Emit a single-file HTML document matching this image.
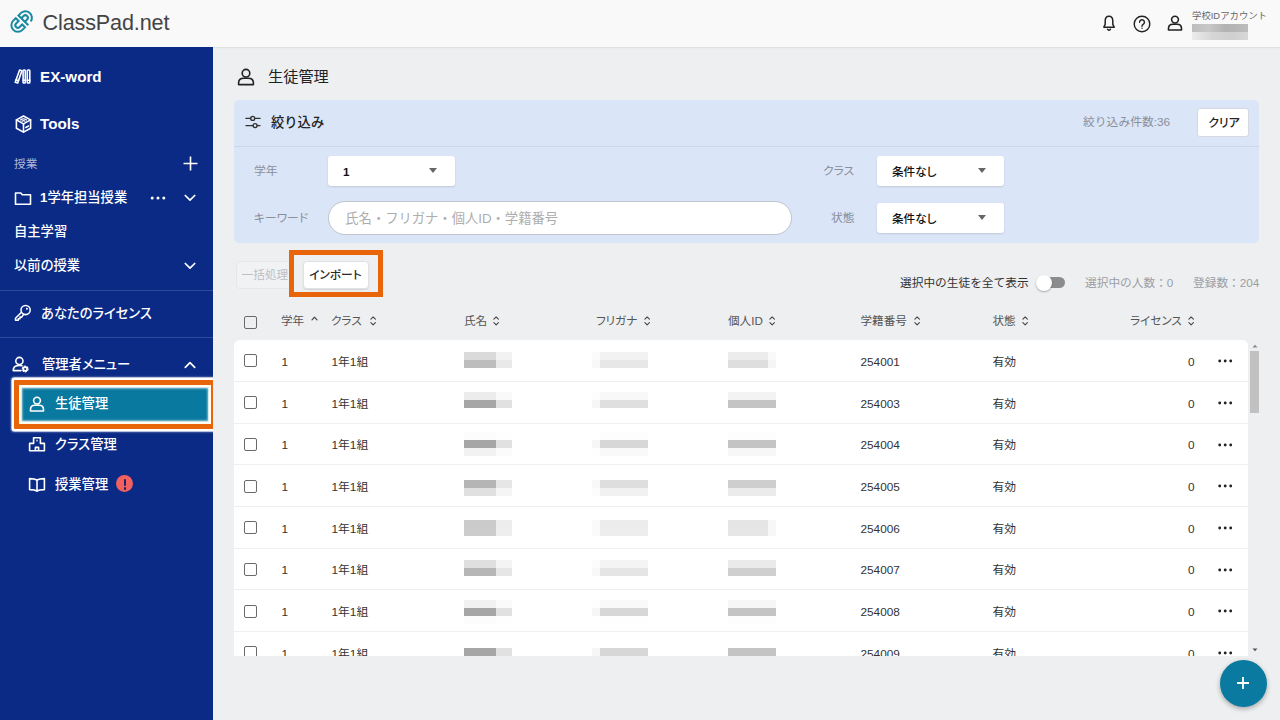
<!DOCTYPE html>
<html lang="ja">
<head>
<meta charset="utf-8">
<title>ClassPad.net</title>
<style>
*{box-sizing:border-box;margin:0;padding:0}
html,body{width:1280px;height:720px;overflow:hidden}
body{font-family:"Liberation Sans","Noto Sans CJK JP",sans-serif;background:#eeeff0;color:#222;position:relative;font-size:13px;font-feature-settings:"palt"}
.np{font-feature-settings:normal}
.abs{position:absolute}
#hdr{position:absolute;left:0;top:0;width:1280px;height:46.5px;background:#f9f9fa;box-shadow:0 0 2px rgba(0,0,0,.18)}
#logo-t{position:absolute;left:42.6px;top:9px;font-size:21.6px;line-height:28px;color:#444;letter-spacing:-0.15px;white-space:nowrap}
#side{overflow:hidden;position:absolute;left:0;top:46.5px;width:213.4px;height:674px;background:#0b2a85;color:#fff}
.sl{position:absolute;white-space:nowrap;color:#fff;line-height:20px}
.t{position:absolute;white-space:nowrap;line-height:20px}
#filter{position:absolute;left:234.3px;top:100.3px;width:1025.2px;height:143px;background:#dbe5f8;border-radius:5px}
#filter .hl{position:absolute;left:0;top:46px;width:100%;height:1px;background:#c9d6ee}
.sel{position:absolute;background:#fff;border-radius:3px;height:30px;width:127px;box-shadow:0 1px 2px rgba(0,0,0,.12)}
.sel span{position:absolute;left:15px;top:6px;line-height:20px;font-size:11.6px;color:#111;font-weight:500}
.sel i{position:absolute;right:18px;top:12px;width:0;height:0;border-left:4.5px solid transparent;border-right:4.5px solid transparent;border-top:5px solid #666}
.lbl{position:absolute;font-size:11.8px;color:#8a8f98;line-height:20px;white-space:nowrap}
#tbl{position:absolute;left:234px;top:340.3px;width:1013.6px;height:315.7px;background:#fff;border-radius:6px 6px 0 0;overflow:hidden}
.row{position:absolute;left:0;width:1014px;height:41.7px;border-bottom:1px solid #eeeff1}
.row .t{font-size:11.8px;color:#333;top:11.6px}
.cb{position:absolute;width:13px;height:13px;border:1.5px solid #6a6a6a;border-radius:2px}
.mz{position:absolute}
.th{position:absolute;top:311px;font-size:11.6px;color:#555;line-height:20px;white-space:nowrap}
</style>
</head>
<body>
<div id="hdr">
  <svg class="abs" style="left:8px;top:8px" width="28" height="28" viewBox="0 0 28 28" fill="none" stroke="#1a8aa2" stroke-width="2" stroke-linejoin="miter">
    <g transform="translate(13.6,13.5) rotate(-45)">
      <path d="M-1.7 -6.5 H-5.3 A6.5 6.5 0 0 0 -5.3 6.5 H-1.7 V2.5 H-5.3 A2.5 2.5 0 0 1 -5.3 -2.5 H-1.7 Z"/>
      <path d="M2.1 7.4 V-6.5 H5.3 A6.5 6.5 0 0 1 6.5 6.4"/>
      <path d="M2.1 -2.5 H5.3 A2.5 2.5 0 0 1 5.3 2.5 H2.1"/>
    </g>
  </svg>
  <div id="logo-t">ClassPad.net</div>
<svg class="abs" style="left:1101px;top:14px" width="16" height="18" viewBox="0 0 16 18" fill="none" stroke="#222" stroke-width="1.5" stroke-linejoin="round" stroke-linecap="round"><path d="M8 2.2 C5.4 2.2 4.2 4.4 4.2 7 V10.4 L2.8 13.2 H13.2 L11.8 10.4 V7 C11.8 4.4 10.6 2.2 8 2.2 Z"/><path d="M6.6 15.2 a1.5 1.5 0 0 0 2.8 0"/></svg>
<svg class="abs" style="left:1133px;top:14.5px" width="18" height="18" viewBox="0 0 18 18" fill="none" stroke="#222" stroke-width="1.4" stroke-linecap="round"><circle cx="9" cy="9" r="7.8"/><path d="M6.6 7.2 a2.4 2.4 0 1 1 3.6 2.1 c-.8 .5 -1.2 .9 -1.2 1.9"/><circle cx="9" cy="13.3" r=".7" fill="#222" stroke="none"/></svg>
<svg class="abs" style="left:1167px;top:15px" width="16" height="16" viewBox="0 0 16 16" fill="none" stroke="#222" stroke-width="1.6" stroke-linejoin="round"><circle cx="8" cy="4.6" r="3.4"/><path d="M1.5 15 V13.4 C1.5 10.6 3.4 9.2 6 9.2 H10 C12.6 9.2 14.5 10.6 14.5 13.4 V15 Z"/></svg>
<div class="t np" style="left:1192px;top:5.6px;font-size:9.4px;color:#666">学校IDアカウント</div>
<div class="abs" style="left:1192px;top:24px;width:56px;height:8px;background:linear-gradient(90deg,#bdbdbd,#c8c8c8 30%,#b2b2b2 60%,#bcbcbc);filter:blur(.6px)"></div>
<div class="abs" style="left:1192px;top:32px;width:56px;height:8px;background:linear-gradient(90deg,#ececec,#d6d6d6 35%,#cfcfcf 70%,#d8d8d8);filter:blur(.6px)"></div>

</div>
<div id="side">
  <!-- EX-word -->
  <svg class="abs" style="left:14.2px;top:22.6px" width="18" height="15" viewBox="0 0 18 15" fill="none" stroke="#fff" stroke-width="1.6" stroke-linejoin="round" stroke-linecap="round">
    <path d="M5.6 1 L7.9 1.7 L3.7 14 L1.2 13.3 Z"/><path d="M2 10.9 L4.5 11.6"/>
    <rect x="9.1" y="1" width="2.2" height="13" rx="0.7"/><path d="M9.1 11.2 h2.2"/>
    <rect x="13.3" y="1" width="2.5" height="13" rx="0.7"/><path d="M13.3 11.2 h2.5"/>
  </svg>
  <div class="sl" style="left:40px;top:20px;font-size:15.2px;font-weight:bold">EX-word</div>
  <!-- Tools -->
  <svg class="abs" style="left:14.8px;top:68px" width="17" height="18" viewBox="0 0 17 18" fill="none" stroke="#fff" stroke-width="1.6" stroke-linejoin="round" stroke-linecap="round">
    <path d="M8.5 1 L15.6 4.9 V13.2 L8.5 17.1 L1.4 13.2 V4.9 Z"/><path d="M1.4 4.9 L8.5 8.9 L15.6 4.9"/><path d="M8.5 8.9 V17.1"/><path d="M5.4 5 Q8.5 2.7 11.6 5" stroke-width="1.2"/><path d="M6.9 6.2 Q8.5 5 10.1 6.2" stroke-width="1.2"/><path d="M10.9 12.5 L13.5 11"/>
  </svg>
  <div class="sl" style="left:40px;top:67px;font-size:15.2px;font-weight:bold">Tools</div>
  <div class="sl" style="left:14px;top:107px;font-size:11.7px;color:#aeb8d8">授業</div>
  <svg class="abs" style="left:182.6px;top:109px" width="15" height="15" viewBox="0 0 15 15" stroke="#fff" stroke-width="1.6" fill="none"><path d="M7.5 0.5 V14.5 M0.5 7.5 H14.5"/></svg>
  <!-- folder row -->
  <svg class="abs" style="left:14px;top:144px" width="18" height="15" viewBox="0 0 18 15" fill="none" stroke="#fff" stroke-width="1.6" stroke-linejoin="round"><path d="M1.5 2 H6.8 L8.3 3.8 H16.5 V13.2 H1.5 Z"/></svg>
  <div class="sl" style="left:40px;top:141px;font-size:13.3px;font-weight:500"><b>1</b>学年担当授業</div>
  <svg class="abs" style="left:150px;top:149px" width="16" height="4" viewBox="0 0 16 4" fill="#fff"><circle cx="2.2" cy="2" r="1.5"/><circle cx="8" cy="2" r="1.5"/><circle cx="13.8" cy="2" r="1.5"/></svg>
  <svg class="abs" style="left:184px;top:147px" width="12" height="8" viewBox="0 0 12 8" fill="none" stroke="#fff" stroke-width="1.7" stroke-linecap="round" stroke-linejoin="round"><path d="M1.3 1.5 L6 6.2 L10.7 1.5"/></svg>
  <div class="sl" style="left:14px;top:175px;font-size:13.3px;font-weight:500">自主学習</div>
  <div class="sl" style="left:14px;top:209px;font-size:13.3px;font-weight:500">以前の授業</div>
  <svg class="abs" style="left:184px;top:215px" width="12" height="8" viewBox="0 0 12 8" fill="none" stroke="#fff" stroke-width="1.7" stroke-linecap="round" stroke-linejoin="round"><path d="M1.3 1.5 L6 6.2 L10.7 1.5"/></svg>
  <div class="abs" style="left:0;top:243px;width:213px;height:1px;background:#30499b"></div>
  <!-- license -->
  <svg class="abs" style="left:14.4px;top:257.9px" width="18" height="18" viewBox="0 0 18 18" fill="none" stroke="#fff" stroke-width="1.55" stroke-linecap="round" stroke-linejoin="round"><circle cx="11.6" cy="6" r="4.6"/><circle cx="12.9" cy="4.8" r="1.05" fill="#fff" stroke="none"/><path d="M7.5 8.2 L1.5 14.2 V16.3 H4.3 V14.8 H6 V13.1 H7.7 L9.6 10.4"/></svg>
  <div class="sl" style="left:41px;top:257px;font-size:13.3px;font-weight:500">あなたのライセンス</div>
  <div class="abs" style="left:0;top:290.2px;width:214px;height:1px;background:#2f4a9d"></div>
  <!-- admin -->
  <svg class="abs" style="left:12px;top:309px" width="18" height="18" viewBox="0 0 18 18" fill="none" stroke="#fff" stroke-width="1.6" stroke-linecap="round" stroke-linejoin="round"><circle cx="7.4" cy="5" r="3.6"/><path d="M9 14.6 H1.2 C1.2 11 3.6 9.4 7.4 9.4 c1 0 1.8 .1 2.6 .4"/><circle cx="13.2" cy="13" r="1.9" stroke-width="1.7"/><circle cx="13.2" cy="13" r="2.9" stroke-width="1.1" stroke-dasharray="1.4 1.64"/></svg>
  <div class="sl" style="left:42px;top:308px;font-size:13.3px;font-weight:500">管理者メニュー</div>
  <svg class="abs" style="left:184px;top:314px" width="12" height="8" viewBox="0 0 12 8" fill="none" stroke="#fff" stroke-width="1.7" stroke-linecap="round" stroke-linejoin="round"><path d="M1.3 6.3 L6 1.6 L10.7 6.3"/></svg>
  <!-- selected -->
  <div class="abs" style="left:14px;top:333.7px;width:202px;height:48.4px;border:5px solid #e8650a;background:#0a79a0;box-shadow:0 0 0 2.4px #fff, 0 0 2px 2.6px rgba(255,255,255,.6), inset 0 0 0 2.6px #fffdf0, inset 0 0 2px 3.4px rgba(255,255,255,.7);border-radius:1px"></div>
  <svg class="abs" style="left:28.7px;top:349.2px" width="16" height="16" viewBox="0 0 16 16" fill="none" stroke="#fff" stroke-width="1.6" stroke-linejoin="round"><circle cx="8" cy="4.6" r="3.4"/><path d="M1.5 15 V13.4 C1.5 10.6 3.4 9.2 6 9.2 H10 C12.6 9.2 14.5 10.6 14.5 13.4 V15 Z"/></svg>
  <div class="sl" style="left:55px;top:347.5px;font-size:13.3px;font-weight:500">生徒管理</div>
  <!-- class mgmt -->
  <svg class="abs" style="left:28px;top:389px" width="18" height="18" viewBox="0 0 18 18" fill="none" stroke="#fff" stroke-width="1.6" stroke-linejoin="round"><path d="M5.6 1.7 H12.4 V7.4 H16.4 V14.7 H1.6 V7.4 H5.6 Z"/><path d="M7.4 14.7 V11.4 H10.6 V14.7"/><path d="M8.4 4.7 h1.2" stroke-width="1.8"/></svg>
  <div class="sl" style="left:55px;top:388px;font-size:13.3px;font-weight:500">クラス管理</div>
  <!-- lesson mgmt -->
  <svg class="abs" style="left:28px;top:430px" width="18" height="16" viewBox="0 0 18 16" fill="none" stroke="#fff" stroke-width="1.6" stroke-linejoin="round"><path d="M9 3 C7.4 2 5 1.6 1.6 1.6 V12.6 C5 12.6 7.4 13 9 14.2 C10.6 13 13 12.6 16.4 12.6 V1.6 C13 1.6 10.6 2 9 3 Z"/><path d="M9 3 V14.2"/></svg>
  <div class="sl" style="left:55px;top:428px;font-size:13.3px;font-weight:500">授業管理</div>
  <div class="abs" style="left:116.2px;top:428.7px;width:17.2px;height:17.2px;border-radius:50%;background:#f0605f"></div>
  <div class="abs" style="left:123.7px;top:432.7px;width:2.3px;height:7.2px;background:#1b2266;border-radius:1px"></div>
  <div class="abs" style="left:123.55px;top:440.9px;width:2.6px;height:2.6px;background:#1b2266;border-radius:50%"></div>
</div>
<div id="main">
<svg class="abs" style="left:237px;top:68px" width="18" height="18" viewBox="0 0 18 18" fill="none" stroke="#222" stroke-width="1.6" stroke-linejoin="round"><circle cx="9" cy="5.2" r="3.8"/><path d="M1.6 16.6 V14.8 C1.6 11.8 3.8 10.2 6.8 10.2 H11.2 C14.2 10.2 16.4 11.8 16.4 14.8 V16.6 Z"/></svg>
<div class="t" style="left:268px;top:66px;font-size:15.2px;color:#222;line-height:22px">生徒管理</div>
<div id="filter"><div class="hl"></div></div>
<svg class="abs" style="left:245.2px;top:113.7px" width="16" height="16" viewBox="0 0 16 16" fill="none" stroke="#333" stroke-width="1.4" stroke-linecap="round"><path d="M1 4.4 H5.6 M9.8 4.4 H15 M1 11.6 H8 M12.2 11.6 H15"/><circle cx="7.7" cy="4.4" r="2"/><circle cx="10.1" cy="11.6" r="2"/></svg>
<div class="t np" style="left:271px;top:112.5px;font-size:13.3px;color:#222;font-weight:500">絞り込み</div>
<div class="lbl np" style="left:1083px;top:112.3px">絞り込み件数:36</div>
<div class="abs" style="left:1197px;top:108px;width:52px;height:29px;background:#fff;border:1px solid #d3d8e2;border-radius:3px"></div>
<div class="t" style="left:1208.3px;top:112.5px;font-size:11.9px;color:#222;font-weight:500">クリア</div>
<div class="lbl" style="left:254px;top:160.7px">学年</div>
<div class="sel" style="left:328px;top:156px"><span><b>1</b></span><i></i></div>
<div class="lbl" style="left:823px;top:160.7px">クラス</div>
<div class="sel" style="left:877px;top:156px"><span>条件なし</span><i></i></div>
<div class="lbl" style="left:254px;top:207.5px">キーワード</div>
<div class="abs" style="left:327.6px;top:201.2px;width:464.6px;height:33.4px;border-radius:17px;background:#fff;border:1px solid #c0c4cd"></div>
<div class="t np" style="left:345.3px;top:209px;font-size:13.3px;color:#adadad">氏名・フリガナ・個人ID・学籍番号</div>
<div class="lbl" style="left:831px;top:207.5px">状態</div>
<div class="sel" style="left:877px;top:203px"><span>条件なし</span><i></i></div>
<!-- buttons -->
<div class="abs" style="left:235.5px;top:261px;width:56px;height:27.5px;background:#f1f2f4;border:1px solid #e6e7ea;border-radius:4px"></div>
<div class="t" style="left:241.5px;top:265px;font-size:11.7px;color:#bcbfc5">一括処理</div>
<div class="abs" style="left:289.4px;top:250px;width:93.7px;height:46.5px;border:5px solid #e8650a;background:#eeeff1"></div>
<div class="abs" style="left:302.5px;top:261px;width:66px;height:27.5px;background:#fff;border:1px solid #dfe1e5;border-radius:4px;box-shadow:0 1px 1.5px rgba(0,0,0,.12)"></div>
<div class="t" style="left:309.2px;top:265px;font-size:11.7px;color:#2a2a2a;font-weight:500">インポート</div>
<div class="t np" style="left:900px;top:273px;font-size:11.7px;color:#333">選択中の生徒を全て表示</div>
<div class="abs" style="left:1041px;top:277px;width:24px;height:11px;border-radius:6px;background:#8c8c8c"></div>
<div class="abs" style="left:1036px;top:274.5px;width:16px;height:16px;border-radius:50%;background:#fff;box-shadow:0 1px 2px rgba(0,0,0,.3)"></div>
<div class="t np" style="left:1085px;top:273px;font-size:11.7px;color:#9a9ea6">選択中の人数：0</div>
<div class="t np" style="left:1193px;top:273px;font-size:11.7px;color:#9a9ea6">登録数：204</div>
<!-- table header -->
<div class="cb" style="left:244px;top:315.5px"></div>
<div class="th" style="left:281px">学年</div>
<svg class="abs" style="left:310.5px;top:316px" width="7" height="5" viewBox="0 0 7 5" fill="none" stroke="#444" stroke-width="1.2" stroke-linecap="round" stroke-linejoin="round"><path d="M1 3.8 L3.5 1.2 L6 3.8"/></svg>
<div class="th" style="left:331px">クラス</div>
<svg class="abs" style="left:369.5px;top:316.3px" width="6.3" height="9.9" viewBox="0 0 7 11" fill="none" stroke="#444" stroke-width="1.2" stroke-linecap="round" stroke-linejoin="round"><path d="M1 3.6 L3.5 1.1 L6 3.6 M1 7.4 L3.5 9.9 L6 7.4"/></svg>
<div class="th" style="left:464px">氏名</div>
<svg class="abs" style="left:492.5px;top:316.3px" width="6.3" height="9.9" viewBox="0 0 7 11" fill="none" stroke="#444" stroke-width="1.2" stroke-linecap="round" stroke-linejoin="round"><path d="M1 3.6 L3.5 1.1 L6 3.6 M1 7.4 L3.5 9.9 L6 7.4"/></svg>
<div class="th" style="left:596px">フリガナ</div>
<svg class="abs" style="left:644.3px;top:316.3px" width="6.3" height="9.9" viewBox="0 0 7 11" fill="none" stroke="#444" stroke-width="1.2" stroke-linecap="round" stroke-linejoin="round"><path d="M1 3.6 L3.5 1.1 L6 3.6 M1 7.4 L3.5 9.9 L6 7.4"/></svg>
<div class="th" style="left:728px">個人ID</div>
<svg class="abs" style="left:769.3px;top:316.3px" width="6.3" height="9.9" viewBox="0 0 7 11" fill="none" stroke="#444" stroke-width="1.2" stroke-linecap="round" stroke-linejoin="round"><path d="M1 3.6 L3.5 1.1 L6 3.6 M1 7.4 L3.5 9.9 L6 7.4"/></svg>
<div class="th" style="left:860.5px">学籍番号</div>
<svg class="abs" style="left:913.5px;top:316.3px" width="6.3" height="9.9" viewBox="0 0 7 11" fill="none" stroke="#444" stroke-width="1.2" stroke-linecap="round" stroke-linejoin="round"><path d="M1 3.6 L3.5 1.1 L6 3.6 M1 7.4 L3.5 9.9 L6 7.4"/></svg>
<div class="th" style="left:992.5px">状態</div>
<svg class="abs" style="left:1022px;top:316.3px" width="6.3" height="9.9" viewBox="0 0 7 11" fill="none" stroke="#444" stroke-width="1.2" stroke-linecap="round" stroke-linejoin="round"><path d="M1 3.6 L3.5 1.1 L6 3.6 M1 7.4 L3.5 9.9 L6 7.4"/></svg>
<div class="th" style="left:1130px">ライセンス</div>
<svg class="abs" style="left:1188px;top:316.3px" width="6.3" height="9.9" viewBox="0 0 7 11" fill="none" stroke="#444" stroke-width="1.2" stroke-linecap="round" stroke-linejoin="round"><path d="M1 3.6 L3.5 1.1 L6 3.6 M1 7.4 L3.5 9.9 L6 7.4"/></svg>
<div id="tbl">
<div class="mz" style="left:230px;top:11.7px;width:32px;height:8px;background:#dadada"></div><div class="mz" style="left:262px;top:11.7px;width:16px;height:8px;background:#f2f2f2"></div><div class="mz" style="left:358px;top:11.7px;width:8px;height:8px;background:#fbfbfb"></div><div class="mz" style="left:366px;top:11.7px;width:48px;height:8px;background:#f2f2f2"></div><div class="mz" style="left:494px;top:11.7px;width:40px;height:8px;background:#ececec"></div><div class="mz" style="left:534px;top:11.7px;width:8px;height:8px;background:#f9f9f9"></div><div class="mz" style="left:230px;top:19.7px;width:32px;height:8px;background:#bdbdbd"></div><div class="mz" style="left:262px;top:19.7px;width:16px;height:8px;background:#e9e9e9"></div><div class="mz" style="left:358px;top:19.7px;width:8px;height:8px;background:#f8f8f8"></div><div class="mz" style="left:366px;top:19.7px;width:48px;height:8px;background:#e7e7e7"></div><div class="mz" style="left:494px;top:19.7px;width:40px;height:8px;background:#dedede"></div><div class="mz" style="left:534px;top:19.7px;width:8px;height:8px;background:#f5f5f5"></div><div class="mz" style="left:230px;top:51.7px;width:32px;height:8px;background:#ececec"></div><div class="mz" style="left:262px;top:51.7px;width:16px;height:8px;background:#f9f9f9"></div><div class="mz" style="left:358px;top:51.7px;width:8px;height:8px;background:#fdfdfd"></div><div class="mz" style="left:366px;top:51.7px;width:48px;height:8px;background:#f8f8f8"></div><div class="mz" style="left:494px;top:51.7px;width:48px;height:8px;background:#f3f3f3"></div><div class="mz" style="left:230px;top:59.7px;width:32px;height:8px;background:#a6a6a6"></div><div class="mz" style="left:262px;top:59.7px;width:16px;height:8px;background:#e1e1e1"></div><div class="mz" style="left:358px;top:59.7px;width:8px;height:8px;background:#f6f6f6"></div><div class="mz" style="left:366px;top:59.7px;width:48px;height:8px;background:#dfdfdf"></div><div class="mz" style="left:494px;top:59.7px;width:48px;height:8px;background:#c4c4c4"></div><div class="mz" style="left:230px;top:91.7px;width:32px;height:8px;background:#fcfcfc"></div><div class="mz" style="left:262px;top:91.7px;width:16px;height:8px;background:#fefefe"></div><div class="mz" style="left:358px;top:91.7px;width:8px;height:8px;background:#ffffff"></div><div class="mz" style="left:366px;top:91.7px;width:48px;height:8px;background:#fdfdfd"></div><div class="mz" style="left:494px;top:91.7px;width:48px;height:8px;background:#fdfdfd"></div><div class="mz" style="left:230px;top:99.7px;width:32px;height:8px;background:#a6a6a6"></div><div class="mz" style="left:262px;top:99.7px;width:16px;height:8px;background:#e1e1e1"></div><div class="mz" style="left:358px;top:99.7px;width:8px;height:8px;background:#f6f6f6"></div><div class="mz" style="left:366px;top:99.7px;width:48px;height:8px;background:#d7d7d7"></div><div class="mz" style="left:494px;top:99.7px;width:48px;height:8px;background:#c4c4c4"></div><div class="mz" style="left:230px;top:107.7px;width:32px;height:8px;background:#f2f2f2"></div><div class="mz" style="left:262px;top:107.7px;width:16px;height:8px;background:#fbfbfb"></div><div class="mz" style="left:358px;top:107.7px;width:8px;height:8px;background:#fefefe"></div><div class="mz" style="left:366px;top:107.7px;width:48px;height:8px;background:#f9f9f9"></div><div class="mz" style="left:494px;top:107.7px;width:48px;height:8px;background:#f7f7f7"></div><div class="mz" style="left:230px;top:139.7px;width:32px;height:8px;background:#b5b5b5"></div><div class="mz" style="left:262px;top:139.7px;width:16px;height:8px;background:#e6e6e6"></div><div class="mz" style="left:358px;top:139.7px;width:8px;height:8px;background:#f8f8f8"></div><div class="mz" style="left:366px;top:139.7px;width:48px;height:8px;background:#dedede"></div><div class="mz" style="left:494px;top:139.7px;width:48px;height:8px;background:#cecece"></div><div class="mz" style="left:230px;top:147.7px;width:32px;height:8px;background:#e0e0e0"></div><div class="mz" style="left:262px;top:147.7px;width:16px;height:8px;background:#f5f5f5"></div><div class="mz" style="left:358px;top:147.7px;width:8px;height:8px;background:#fcfcfc"></div><div class="mz" style="left:366px;top:147.7px;width:48px;height:8px;background:#f1f1f1"></div><div class="mz" style="left:494px;top:147.7px;width:48px;height:8px;background:#ebebeb"></div><div class="mz" style="left:230px;top:179.7px;width:32px;height:8px;background:#cbcbcb"></div><div class="mz" style="left:262px;top:179.7px;width:16px;height:8px;background:#ededed"></div><div class="mz" style="left:358px;top:179.7px;width:8px;height:8px;background:#fafafa"></div><div class="mz" style="left:366px;top:179.7px;width:48px;height:8px;background:#ececec"></div><div class="mz" style="left:494px;top:179.7px;width:40px;height:8px;background:#e5e5e5"></div><div class="mz" style="left:534px;top:179.7px;width:8px;height:8px;background:#f7f7f7"></div><div class="mz" style="left:230px;top:187.7px;width:32px;height:8px;background:#cccccc"></div><div class="mz" style="left:262px;top:187.7px;width:16px;height:8px;background:#eeeeee"></div><div class="mz" style="left:358px;top:187.7px;width:8px;height:8px;background:#fafafa"></div><div class="mz" style="left:366px;top:187.7px;width:48px;height:8px;background:#ededed"></div><div class="mz" style="left:494px;top:187.7px;width:40px;height:8px;background:#e6e6e6"></div><div class="mz" style="left:534px;top:187.7px;width:8px;height:8px;background:#f7f7f7"></div><div class="mz" style="left:230px;top:219.7px;width:32px;height:8px;background:#dfdfdf"></div><div class="mz" style="left:262px;top:219.7px;width:16px;height:8px;background:#f4f4f4"></div><div class="mz" style="left:358px;top:219.7px;width:8px;height:8px;background:#fcfcfc"></div><div class="mz" style="left:366px;top:219.7px;width:48px;height:8px;background:#f4f4f4"></div><div class="mz" style="left:494px;top:219.7px;width:48px;height:8px;background:#eaeaea"></div><div class="mz" style="left:230px;top:227.7px;width:32px;height:8px;background:#b6b6b6"></div><div class="mz" style="left:262px;top:227.7px;width:16px;height:8px;background:#e6e6e6"></div><div class="mz" style="left:358px;top:227.7px;width:8px;height:8px;background:#f8f8f8"></div><div class="mz" style="left:366px;top:227.7px;width:48px;height:8px;background:#e5e5e5"></div><div class="mz" style="left:494px;top:227.7px;width:48px;height:8px;background:#cfcfcf"></div><div class="mz" style="left:230px;top:259.7px;width:32px;height:8px;background:#f1f1f1"></div><div class="mz" style="left:262px;top:259.7px;width:16px;height:8px;background:#fafafa"></div><div class="mz" style="left:358px;top:259.7px;width:8px;height:8px;background:#fefefe"></div><div class="mz" style="left:366px;top:259.7px;width:48px;height:8px;background:#f9f9f9"></div><div class="mz" style="left:494px;top:259.7px;width:48px;height:8px;background:#f6f6f6"></div><div class="mz" style="left:230px;top:267.7px;width:32px;height:8px;background:#a6a6a6"></div><div class="mz" style="left:262px;top:267.7px;width:16px;height:8px;background:#e1e1e1"></div><div class="mz" style="left:358px;top:267.7px;width:8px;height:8px;background:#f6f6f6"></div><div class="mz" style="left:366px;top:267.7px;width:48px;height:8px;background:#d7d7d7"></div><div class="mz" style="left:494px;top:267.7px;width:48px;height:8px;background:#c4c4c4"></div><div class="mz" style="left:230px;top:275.7px;width:32px;height:8px;background:#fcfcfc"></div><div class="mz" style="left:262px;top:275.7px;width:16px;height:8px;background:#fefefe"></div><div class="mz" style="left:358px;top:275.7px;width:8px;height:8px;background:#ffffff"></div><div class="mz" style="left:366px;top:275.7px;width:48px;height:8px;background:#fefefe"></div><div class="mz" style="left:494px;top:275.7px;width:48px;height:8px;background:#fdfdfd"></div><div class="mz" style="left:230px;top:307.7px;width:32px;height:8px;background:#a6a6a6"></div><div class="mz" style="left:262px;top:307.7px;width:16px;height:8px;background:#e1e1e1"></div><div class="mz" style="left:358px;top:307.7px;width:8px;height:8px;background:#f6f6f6"></div><div class="mz" style="left:366px;top:307.7px;width:48px;height:8px;background:#d7d7d7"></div><div class="mz" style="left:494px;top:307.7px;width:48px;height:8px;background:#c4c4c4"></div><div class="mz" style="left:230px;top:315.7px;width:32px;height:8px;background:#ededed"></div><div class="mz" style="left:262px;top:315.7px;width:16px;height:8px;background:#f9f9f9"></div><div class="mz" style="left:358px;top:315.7px;width:8px;height:8px;background:#fdfdfd"></div><div class="mz" style="left:366px;top:315.7px;width:48px;height:8px;background:#f7f7f7"></div><div class="mz" style="left:494px;top:315.7px;width:48px;height:8px;background:#f3f3f3"></div>
<div class="row" style="top:0.0px"><div class="cb" style="left:10px;top:14.2px"></div><div class="t" style="left:47.5px">1</div><div class="t" style="left:97.5px">1年1組</div><div class="t" style="left:626.5px">254001</div><div class="t" style="left:758.5px">有効</div><div class="t" style="left:954px">0</div><svg class="abs" style="left:984px;top:19px" width="15" height="4" viewBox="0 0 15 4" fill="#222"><circle cx="1.7" cy="2" r="1.45"/><circle cx="7.2" cy="2" r="1.45"/><circle cx="12.7" cy="2" r="1.45"/></svg></div>
<div class="row" style="top:41.7px"><div class="cb" style="left:10px;top:14.2px"></div><div class="t" style="left:47.5px">1</div><div class="t" style="left:97.5px">1年1組</div><div class="t" style="left:626.5px">254003</div><div class="t" style="left:758.5px">有効</div><div class="t" style="left:954px">0</div><svg class="abs" style="left:984px;top:19px" width="15" height="4" viewBox="0 0 15 4" fill="#222"><circle cx="1.7" cy="2" r="1.45"/><circle cx="7.2" cy="2" r="1.45"/><circle cx="12.7" cy="2" r="1.45"/></svg></div>
<div class="row" style="top:83.4px"><div class="cb" style="left:10px;top:14.2px"></div><div class="t" style="left:47.5px">1</div><div class="t" style="left:97.5px">1年1組</div><div class="t" style="left:626.5px">254004</div><div class="t" style="left:758.5px">有効</div><div class="t" style="left:954px">0</div><svg class="abs" style="left:984px;top:19px" width="15" height="4" viewBox="0 0 15 4" fill="#222"><circle cx="1.7" cy="2" r="1.45"/><circle cx="7.2" cy="2" r="1.45"/><circle cx="12.7" cy="2" r="1.45"/></svg></div>
<div class="row" style="top:125.1px"><div class="cb" style="left:10px;top:14.2px"></div><div class="t" style="left:47.5px">1</div><div class="t" style="left:97.5px">1年1組</div><div class="t" style="left:626.5px">254005</div><div class="t" style="left:758.5px">有効</div><div class="t" style="left:954px">0</div><svg class="abs" style="left:984px;top:19px" width="15" height="4" viewBox="0 0 15 4" fill="#222"><circle cx="1.7" cy="2" r="1.45"/><circle cx="7.2" cy="2" r="1.45"/><circle cx="12.7" cy="2" r="1.45"/></svg></div>
<div class="row" style="top:166.8px"><div class="cb" style="left:10px;top:14.2px"></div><div class="t" style="left:47.5px">1</div><div class="t" style="left:97.5px">1年1組</div><div class="t" style="left:626.5px">254006</div><div class="t" style="left:758.5px">有効</div><div class="t" style="left:954px">0</div><svg class="abs" style="left:984px;top:19px" width="15" height="4" viewBox="0 0 15 4" fill="#222"><circle cx="1.7" cy="2" r="1.45"/><circle cx="7.2" cy="2" r="1.45"/><circle cx="12.7" cy="2" r="1.45"/></svg></div>
<div class="row" style="top:208.5px"><div class="cb" style="left:10px;top:14.2px"></div><div class="t" style="left:47.5px">1</div><div class="t" style="left:97.5px">1年1組</div><div class="t" style="left:626.5px">254007</div><div class="t" style="left:758.5px">有効</div><div class="t" style="left:954px">0</div><svg class="abs" style="left:984px;top:19px" width="15" height="4" viewBox="0 0 15 4" fill="#222"><circle cx="1.7" cy="2" r="1.45"/><circle cx="7.2" cy="2" r="1.45"/><circle cx="12.7" cy="2" r="1.45"/></svg></div>
<div class="row" style="top:250.2px"><div class="cb" style="left:10px;top:14.2px"></div><div class="t" style="left:47.5px">1</div><div class="t" style="left:97.5px">1年1組</div><div class="t" style="left:626.5px">254008</div><div class="t" style="left:758.5px">有効</div><div class="t" style="left:954px">0</div><svg class="abs" style="left:984px;top:19px" width="15" height="4" viewBox="0 0 15 4" fill="#222"><circle cx="1.7" cy="2" r="1.45"/><circle cx="7.2" cy="2" r="1.45"/><circle cx="12.7" cy="2" r="1.45"/></svg></div>
<div class="row" style="top:291.9px"><div class="cb" style="left:10px;top:14.2px"></div><div class="t" style="left:47.5px">1</div><div class="t" style="left:97.5px">1年1組</div><div class="t" style="left:626.5px">254009</div><div class="t" style="left:758.5px">有効</div><div class="t" style="left:954px">0</div><svg class="abs" style="left:984px;top:19px" width="15" height="4" viewBox="0 0 15 4" fill="#222"><circle cx="1.7" cy="2" r="1.45"/><circle cx="7.2" cy="2" r="1.45"/><circle cx="12.7" cy="2" r="1.45"/></svg></div>
</div>
<div class="abs" style="left:1250px;top:351px;width:9px;height:62px;background:#c1c1c1"></div>
<svg class="abs" style="left:1251.5px;top:344px" width="6" height="4" viewBox="0 0 6 4"><path d="M0.5 3.5 L3 0.8 L5.5 3.5 Z" fill="#888"/></svg>
<svg class="abs" style="left:1251.5px;top:648px" width="6" height="4" viewBox="0 0 6 4"><path d="M0.5 0.5 L3 3.2 L5.5 0.5 Z" fill="#555"/></svg>
<div class="abs" style="left:1219.5px;top:659.5px;width:47px;height:47px;border-radius:50%;background:#0a7aa0;box-shadow:0 2px 5px rgba(0,0,0,.3)"></div>
<svg class="abs" style="left:1236px;top:676px" width="14" height="14" viewBox="0 0 14 14" stroke="#fff" stroke-width="1.8" fill="none"><path d="M7 1 V13 M1 7 H13"/></svg>
</div>
</body>
</html>
